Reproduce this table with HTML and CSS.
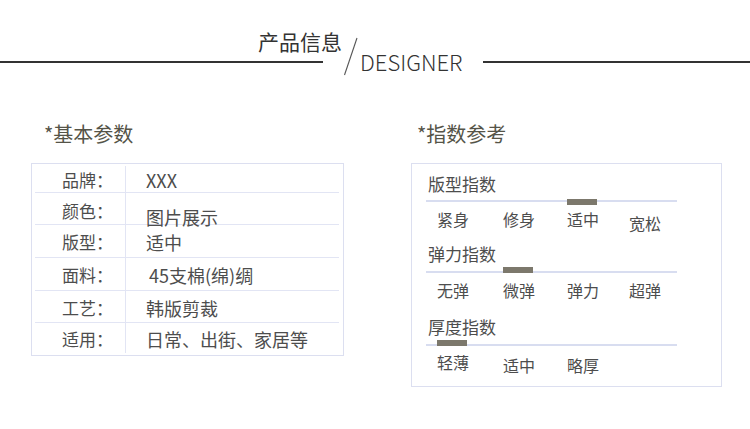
FILE: index.html
```html
<!DOCTYPE html>
<html lang="zh-CN">
<head>
<meta charset="utf-8">
<title>产品信息</title>
<link rel="stylesheet" href="styles.css">
</head>
<body>
<header class="banner">
  <div class="banner-left">
    <h1 class="banner-title">产品信息</h1>
    <div class="rule rule-left"></div>
  </div>
  <svg class="slash" width="15" height="39" viewBox="0 0 15 39" aria-hidden="true"><line x1="14" y1="1" x2="1.5" y2="38" stroke="#555" stroke-width="1.1"/></svg>
  <span class="designer">DESIGNER</span>
  <div class="rule rule-right"></div>
</header>

<main class="panels">
  <section class="panel panel-basic">
    <h2 class="panel-heading">*基本参数</h2>
    <div class="spec-box">
      <div class="spec-row r1"><span class="spec-label">品牌：</span><span class="spec-value">XXX</span></div>
      <div class="spec-row r2"><span class="spec-label">颜色：</span><span class="spec-value drop">图片展示</span></div>
      <div class="spec-row r3"><span class="spec-label">版型：</span><span class="spec-value">适中</span></div>
      <div class="spec-row r4"><span class="spec-label">面料：</span><span class="spec-value nudge">45支棉(绵)绸</span></div>
      <div class="spec-row r5"><span class="spec-label">工艺：</span><span class="spec-value">韩版剪裁</span></div>
      <div class="spec-row r6"><span class="spec-label">适用：</span><span class="spec-value">日常、出街、家居等</span></div>
    </div>
  </section>

  <section class="panel panel-index">
    <h2 class="panel-heading">*指数参考</h2>
    <div class="index-box">
      <div class="scale s1">
        <div class="scale-title">版型指数</div>
        <div class="track"><span class="marker" style="left:141px"></span></div>
        <div class="ticks"><span>紧身</span><span>修身</span><span>适中</span><span class="low">宽松</span></div>
      </div>
      <div class="scale s2">
        <div class="scale-title">弹力指数</div>
        <div class="track"><span class="marker" style="left:77px"></span></div>
        <div class="ticks"><span>无弹</span><span>微弹</span><span>弹力</span><span>超弹</span></div>
      </div>
      <div class="scale s3">
        <div class="scale-title">厚度指数</div>
        <div class="track"><span class="marker" style="left:11px"></span></div>
        <div class="ticks"><span class="high">轻薄</span><span>适中</span><span>略厚</span></div>
      </div>
    </div>
  </section>
</main>
</body>
</html>
```

FILE: styles.css
```css
html, body {
  margin: 0;
  padding: 0;
}
body {
  width: 750px;
  height: 429px;
  overflow: hidden;
  background: #fff;
  font-family: "Noto Sans CJK SC", "Noto Sans", sans-serif;
  color: #4d4d4d;
}

/* ---------- banner ---------- */
.banner {
  display: flex;
  align-items: flex-start;
  margin-top: 31px;
}
.banner-left {
  width: 342px;
  display: flex;
  flex-direction: column;
}
.banner-title {
  margin: 0;
  font-size: 21px;
  line-height: 21px;
  font-weight: 400;
  color: #333;
  text-align: right;
}
.rule {
  height: 2px;
  background: #333;
}
.rule-left {
  width: 323px;
  margin-top: 9px;
}
.slash {
  display: block;
  margin-left: 1px;
  margin-top: 6px;
}
.designer {
  margin-left: 2px;
  margin-top: 19px;
  font-size: 22px;
  line-height: 22px;
  font-weight: 300;
  color: #333;
}
.rule-right {
  width: 267px;
  margin-left: auto;
  margin-top: 30px;
}

/* ---------- panels ---------- */
.panels {
  display: flex;
  align-items: flex-start;
  padding-top: 48px;
  padding-left: 31px;
  gap: 67px;
}
.panel-heading {
  margin: 0 0 19px;
  font-size: 20px;
  line-height: 20px;
  font-weight: 400;
  color: #555448;
}
.panel-basic { width: 313px; }
.panel-basic .panel-heading { padding-left: 13px; }
.panel-index { width: 311px; }
.panel-index .panel-heading { padding-left: 6px; }

/* ---------- spec table ---------- */
.spec-box {
  box-sizing: border-box;
  width: 313px;
  border: 1px solid #dcdff0;
  padding: 2px 4px 2px 3px;
}
.spec-row {
  display: grid;
  grid-template-columns: 91px 1fr;
  box-sizing: border-box;
  height: 33px;
  border-bottom: 1px solid #e2e5f4;
  font-size: 17px;
  line-height: 20px;
}
.spec-row.r1 { height: 27px; }
.spec-row.r2, .spec-row.r5 { height: 32px; }
.spec-row.r6 { height: 30px; border-bottom: none; }
.spec-label {
  box-sizing: border-box;
  border-right: 1px solid #e2e5f4;
  padding-left: 27px;
  display: flex;
  align-items: center;
  padding-top: 2px;
}
.spec-value {
  padding-left: 20px;
  display: flex;
  align-items: center;
  padding-top: 2px;
  font-size: 18px;
}
.spec-value.drop { padding-top: 14px; }
.spec-value.nudge { padding-left: 23px; }

/* ---------- index box ---------- */
.index-box {
  box-sizing: border-box;
  width: 311px;
  border: 1px solid #dcdff0;
  padding: 10px 0 11px 14px;
}
.scale-title {
  font-size: 17px;
  line-height: 20px;
  padding-left: 2px;
}
.track {
  position: relative;
  width: 251px;
  height: 2px;
  background: #d8ddf0;
  margin-top: 6px;
}
.marker {
  position: absolute;
  top: -1px;
  width: 30px;
  height: 6px;
  background: #7c786c;
}
.ticks {
  display: grid;
  grid-template-columns: 66px 64px 62px 64px;
  align-items: start;
  padding-left: 11px;
  margin-top: 7px;
  font-size: 16px;
  line-height: 20px;
}
.ticks .low { margin-top: 4px; }
.ticks .high { margin-top: -3px; }

.s2 { margin-top: 11px; }
.s2 .track { margin-top: 7px; }
.s2 .marker { top: -4px; }
.s3 { margin-top: 17px; }
.s3 .track { margin-top: 7px; }
.s3 .marker { top: -4px; }
.s3 .ticks { margin-top: 9px; }
```
